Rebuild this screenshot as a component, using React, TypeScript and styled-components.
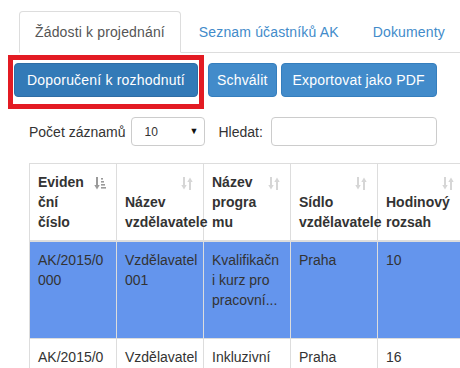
import React from "react";
import styled, { createGlobalStyle } from "styled-components";

const GlobalStyle = createGlobalStyle`
  html, body {
    margin: 0;
    padding: 0;
    overflow: hidden;
    background: #fff;
  }
  body {
    font-family: "Liberation Sans", Helvetica, Arial, sans-serif;
    font-size: 14px;
    line-height: 20px;
    color: #333;
  }
`;

type SortState = "asc" | "none";

interface Column {
  lines: string[];
  sort: SortState;
}

interface Row {
  selected?: boolean;
  cells: string[][];
}

const columns: Column[] = [
  { lines: ["Eviden", "ční", "číslo"], sort: "asc" },
  { lines: ["Název", "vzdělavatele"], sort: "none" },
  { lines: ["Název", "progra", "mu"], sort: "none" },
  { lines: ["Sídlo", "vzdělavatele"], sort: "none" },
  { lines: ["Hodinový", "rozsah"], sort: "none" },
];

const rows: Row[] = [
  {
    selected: true,
    cells: [
      ["AK/2015/0", "000"],
      ["Vzdělavatel", "001"],
      ["Kvalifikačn", "i kurz pro", "pracovní..."],
      ["Praha"],
      ["10"],
    ],
  },
  {
    cells: [
      ["AK/2015/0", "001"],
      ["Vzdělavatel", "002"],
      ["Inkluzivní", "vzdělávání"],
      ["Praha"],
      ["16"],
    ],
  },
];

const SortIcon = ({ state }: { state: SortState }) =>
  state === "asc" ? (
    <svg viewBox="0 0 12 13" width={12} height={13} fill="#9a9a9a">
      <rect x="2" y="0" width="2" height="9" />
      <polygon points="0.3,8 5.7,8 3,12.5" />
      <rect x="7" y="1" width="2" height="1.6" />
      <rect x="7" y="4" width="3" height="1.6" />
      <rect x="7" y="7" width="4" height="1.6" />
      <rect x="7" y="10" width="5" height="1.6" />
    </svg>
  ) : (
    <svg viewBox="0 0 12 13" width={12} height={13} fill="#d6d6d6">
      <rect x="2" y="0" width="2" height="9" />
      <polygon points="0.3,8 5.7,8 3,12.5" />
      <rect x="8" y="4" width="2" height="9" />
      <polygon points="6.3,5 11.7,5 9,0.5" />
    </svg>
  );

const App = () => {
  return (
    <Page>
      <GlobalStyle />
      <TabBar>
        <Tab $active>Žádosti k projednání</Tab>
        <Tab>Seznam účastníků AK</Tab>
        <Tab>Dokumenty</Tab>
      </TabBar>

      <Toolbar>
        <Highlight>
          <Button $tone="dark">Doporučení k rozhodnutí</Button>
        </Highlight>
        <Button $tone="light" $gap={4} $padX={8}>
          Schválit
        </Button>
        <Button $tone="light" $gap={4} $padX={11}>
          Exportovat jako PDF
        </Button>
      </Toolbar>

      <FilterRow>
        <span>Počet záznamů</span>
        <SelectWrap>
          <Select defaultValue="10">
            <option value="10">10</option>
            <option value="25">25</option>
            <option value="50">50</option>
          </Select>
          <Caret>▼</Caret>
        </SelectWrap>
        <SearchLabel>Hledat:</SearchLabel>
        <SearchInput type="text" />
      </FilterRow>

      <Table>
        <colgroup>
          {columns.map((_, i) => (
            <col key={i} style={{ width: 87 }} />
          ))}
        </colgroup>
        <thead>
          <tr>
            {columns.map((col, i) => (
              <HeadCell key={i}>
                {col.lines.map((l, j) => (
                  <div key={j}>{l}</div>
                ))}
                <SortSlot>
                  <SortIcon state={col.sort} />
                </SortSlot>
              </HeadCell>
            ))}
          </tr>
        </thead>
        <tbody>
          {rows.map((row, i) => (
            <BodyRow key={i} $selected={row.selected}>
              {row.cells.map((cell, j) => (
                <BodyCell key={j}>
                  {cell.map((l, k) => (
                    <div key={k}>{l}</div>
                  ))}
                </BodyCell>
              ))}
            </BodyRow>
          ))}
        </tbody>
      </Table>
    </Page>
  );
};

export default App;

const Page = styled.div`
  padding-top: 11px;
  width: 460px;
  height: 368px;
  overflow: hidden;
`;

const TabBar = styled.ul`
  display: flex;
  margin: 0 0 0 19px;
  padding: 0;
  list-style: none;
  border-bottom: 1px solid #ddd;
`;

const Tab = styled.li<{ $active?: boolean }>`
  flex-shrink: 0;
  margin: 0 2px -1px 0;
  padding: 10px 15px;
  line-height: 20px;
  letter-spacing: 0.15px;
  white-space: nowrap;
  border: 1px solid ${(p) => (p.$active ? "#ddd" : "transparent")};
  border-bottom-color: transparent;
  border-radius: 4px 4px 0 0;
  background: ${(p) => (p.$active ? "#fff" : "transparent")};
  color: ${(p) => (p.$active ? "#555" : "#428bca")};
  cursor: pointer;
`;

const Toolbar = styled.div`
  display: flex;
  align-items: flex-start;
  margin-top: 2px;
  padding-left: 8px;
`;

const Highlight = styled.div`
  display: flex;
  flex-shrink: 0;
  border: 5px solid #e31b23;
  padding: 3px 1px 7px;
`;

const Button = styled.button<{
  $tone: "dark" | "light";
  $gap?: number;
  $padX?: number;
}>`
  flex-shrink: 0;
  margin: 8px 0 0 ${(p) => p.$gap ?? 0}px;
  padding: 6px ${(p) => p.$padX ?? 12}px;
  font-family: inherit;
  font-size: 14px;
  line-height: 20px;
  letter-spacing: 0.2px;
  white-space: nowrap;
  color: #fff;
  border-radius: 4px;
  border: 1px solid ${(p) => (p.$tone === "dark" ? "#2e6da4" : "#357ebd")};
  background: ${(p) => (p.$tone === "dark" ? "#337ab7" : "#428bca")};
  cursor: pointer;

  ${Highlight} & {
    margin: 0;
  }
`;

const FilterRow = styled.div`
  display: flex;
  align-items: center;
  height: 29px;
  margin: 8px 0 0 29px;
`;

const SelectWrap = styled.div`
  position: relative;
  margin-left: 5px;
`;

const Select = styled.select`
  appearance: none;
  width: 74px;
  height: 29px;
  padding: 0 0 0 13px;
  font-family: inherit;
  font-size: 12px;
  color: #333;
  background: #fff;
  border: 1px solid #ccc;
  border-radius: 4px;
  outline: none;
`;

const Caret = styled.span`
  position: absolute;
  right: 6px;
  top: 8px;
  font-size: 9px;
  line-height: 12px;
  color: #111;
  pointer-events: none;
`;

const SearchLabel = styled.span`
  margin-left: 14px;
`;

const SearchInput = styled.input`
  box-sizing: border-box;
  width: 166px;
  height: 29px;
  margin-left: 8px;
  border: 1px solid #ccc;
  border-radius: 4px;
  outline: none;
  font-family: inherit;
  font-size: 14px;
`;

const Table = styled.table`
  margin: 17px 0 0 29px;
  width: 435px;
  table-layout: fixed;
  border-collapse: collapse;
  border-spacing: 0;
`;

const HeadCell = styled.th`
  position: relative;
  padding: 8px;
  vertical-align: bottom;
  text-align: left;
  font-weight: bold;
  white-space: nowrap;
  color: #333;
  border: 1px solid #ddd;
  border-bottom: 2px solid #ddd;
`;

const SortSlot = styled.span`
  position: absolute;
  top: 13px;
  right: 10px;
  display: flex;
`;

const BodyRow = styled.tr<{ $selected?: boolean }>`
  height: ${(p) => (p.$selected ? "97px" : "auto")};
  background: ${(p) => (p.$selected ? "#6495ed" : "#fff")};
`;

const BodyCell = styled.td`
  padding: 8px;
  vertical-align: top;
  white-space: nowrap;
  color: #333;
  border: 1px solid #ddd;
`;
